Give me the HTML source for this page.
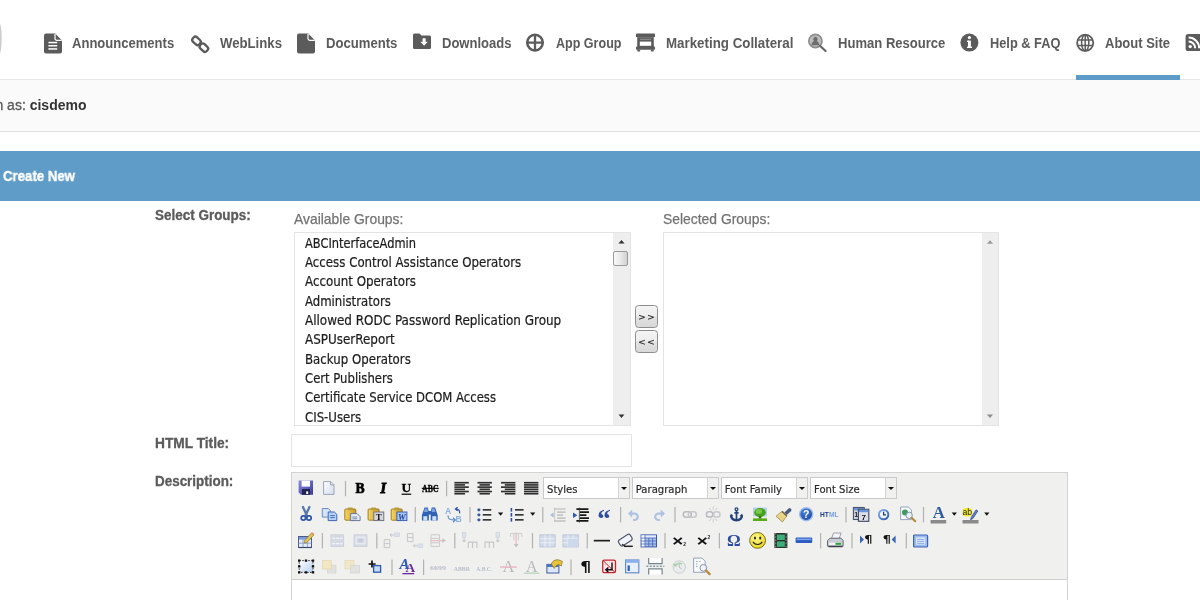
<!DOCTYPE html>
<html><head><meta charset="utf-8"><title>Create New</title>
<style>
*{box-sizing:border-box;margin:0;padding:0}
html,body{width:1200px;height:600px;overflow:hidden;background:#fff}
body{position:relative;font-family:"Liberation Sans",sans-serif;color:#555}
.abs{position:absolute}
#nav{position:absolute;left:0;top:0;width:1200px;height:80px;background:#fff;border-bottom:1px solid #e6e6e6}
.ni{position:absolute;top:34.5px;height:16px;font-weight:bold;font-size:14px;line-height:16px;color:#5b5b5b;white-space:nowrap;transform-origin:0 0}
#active{position:absolute;left:1076px;top:74.5px;width:104px;height:5px;background:#5c9bc8}
#logbar{position:absolute;left:0;top:80px;width:1200px;height:52px;background:#fafafa;border-bottom:1px solid #e3e3e3}
#logbar div{position:absolute;left:-58.3px;top:17px;font-size:14px;line-height:16px;color:#5a5a5a;white-space:nowrap;-webkit-text-stroke:.3px #5a5a5a}
#logbar b{color:#333;-webkit-text-stroke:0}
#bar{position:absolute;left:0;top:151px;width:1200px;height:50px;background:#5f9dc8}
#bar div{position:absolute;left:2.6px;top:17px;font-size:14px;line-height:16px;font-weight:bold;color:#fff;-webkit-text-stroke:.35px #fff;white-space:nowrap;transform-origin:0 0;transform:scaleX(.944)}
.lbl{position:absolute;left:154.700px;font-weight:bold;font-size:14px;line-height:16px;color:#5b5b5b;-webkit-text-stroke:.3px #5b5b5b;white-space:nowrap;transform-origin:0 0;transform:scaleX(.954)}
.sub{position:absolute;font-size:15px;line-height:16px;color:#727272;-webkit-text-stroke:.25px #727272;white-space:nowrap;transform-origin:0 0}
.box{position:absolute;background:#fff;border:1px solid #e4e4e4}
.list{position:absolute;left:305px;top:233.9px;font-family:"DejaVu Sans Condensed","DejaVu Sans",sans-serif;font-size:13.7px;line-height:19.3px;color:#1c1c1c;white-space:nowrap;-webkit-text-stroke:.2px #1c1c1c}
.list span{display:block;width:max-content;transform-origin:0 0}
.track{position:absolute;background:#eee}
.btn{position:absolute;left:635px;width:23px;height:23px;border:1.3px solid #8e8e8e;border-radius:3.5px;background:linear-gradient(#f4f4f4,#eee 45%,#e2e2e2 55%,#d8d8d8);font-family:"DejaVu Sans",sans-serif;font-weight:bold;font-size:9.4px;line-height:22.4px;text-align:center;color:#333;letter-spacing:1.2px;padding-left:1px;white-space:nowrap}
.sel{position:absolute;top:477px;width:87px;height:22px;border:1px solid #cacaca;background:#fff}
.sel span{position:absolute;left:3px;top:4.6px;font-family:"DejaVu Sans Condensed","DejaVu Sans",sans-serif;font-size:11.2px;line-height:14px;color:#2c2c2c;white-space:nowrap;-webkit-text-stroke:.2px #2c2c2c}
.sel i{position:absolute;right:0;top:0;width:11px;height:20px;background:#f0f0ee;border-left:1px solid #d4d4d4}
.sel i:after{content:"";position:absolute;left:2.4px;top:8.8px;border:3.1px solid transparent;border-top:3.3px solid #111;border-bottom:0}
#tbsvg text{font-family:"Liberation Serif",serif}
#w{position:absolute;left:0;top:0;width:1200px;height:600px;will-change:transform}
</style></head><body><div id="w">
<div id="nav">
<span class="ni" style="left:72.4px;transform:scaleX(0.9317)">Announcements</span>
<span class="ni" style="left:219.6px;transform:scaleX(0.9412)">WebLinks</span>
<span class="ni" style="left:325.6px;transform:scaleX(0.9366)">Documents</span>
<span class="ni" style="left:441.6px;transform:scaleX(0.9307)">Downloads</span>
<span class="ni" style="left:555.6px;transform:scaleX(0.8959)">App Group</span>
<span class="ni" style="left:665.6px;transform:scaleX(0.9520)">Marketing Collateral</span>
<span class="ni" style="left:837.6px;transform:scaleX(0.9326)">Human Resource</span>
<span class="ni" style="left:989.6px;transform:scaleX(0.9141)">Help &amp; FAQ</span>
<span class="ni" style="left:1105.0px;transform:scaleX(0.9286)">About Site</span>
<svg class="abs" style="left:0;top:0" width="1200" height="80" viewBox="0 0 1200 80">
<defs><linearGradient id="lg" x1="0" x2="1"><stop offset="0" stop-color="#c4c4c4"/><stop offset="1" stop-color="#eee"/></linearGradient></defs><path d="M0 23 Q4.5 38 0 54 Z" fill="url(#lg)"/><g transform="translate(44,33.6)" fill="#5b5b5b"><path d="M2 0h9.2l6.8 6.8V18a2 2 0 0 1-2 2H2a2 2 0 0 1-2-2V2a2 2 0 0 1 2-2z"/><path d="M11 .3v4.5a2 2 0 0 0 2 2h4.7" fill="none" stroke="#fff" stroke-width="1.2"/><rect x="4.4" y="8.2" width="8.8" height="1.5" fill="#fff"/><rect x="4.4" y="11.4" width="8.8" height="1.5" fill="#fff"/><rect x="4.4" y="14.6" width="8.8" height="1.5" fill="#fff"/></g>
<g fill="none" stroke="#5b5b5b" stroke-width="2.3"><rect x="-4.4" y="-3" width="8.8" height="6" rx="2.5" transform="translate(196.5,40.9) rotate(43)"/><rect x="-4.4" y="-3" width="8.800" height="6" rx="2.5" transform="translate(203.900,47.700) rotate(43)"/></g>
<g transform="translate(297,33.6)" fill="#5b5b5b"><path d="M2 0h9.2l6.8 6.8V18a2 2 0 0 1-2 2H2a2 2 0 0 1-2-2V2a2 2 0 0 1 2-2z"/><path d="M11 .3v4.5a2 2 0 0 0 2 2h4.7" fill="none" stroke="#fff" stroke-width="1.2"/></g>
<g transform="translate(413,33.6)"><path d="M1.5 0h5l2 2h8a1.5 1.5 0 0 1 1.5 1.5v10.5a1.5 1.5 0 0 1-1.5 1.5h-15A1.5 1.5 0 0 1 0 14V1.5A1.5 1.5 0 0 1 1.5 0z" fill="#5b5b5b"/><path d="M9.6 4.6h3v3.6h2.2l-3.7 3.9-3.7-3.9h2.2z" fill="#fff"/></g>
<g fill="none" stroke="#5b5b5b" stroke-width="2.3"><circle cx="535" cy="42.6" r="7.8" stroke-width="2.5"/><path d="M535 35v15.4M527.2 42.6h15.6"/></g>
<g transform="translate(636,33.6)" fill="#5b5b5b"><rect x="0" y="0" width="19" height="3.6" rx=".8"/><path d="M1.2 3.6h16.6v9.8H1.2z"/><rect x="3.8" y="8" width="11.4" height="4.2" fill="#fff"/><rect x="0" y="13" width="19" height="3.2" rx=".8"/><rect x="1.2" y="16" width="3" height="2" rx=".8"/><rect x="14.8" y="16" width="3" height="2" rx=".8"/><rect x="3.8" y="5.2" width="11.4" height="1" fill="#fff" opacity=".35"/></g>
<g><circle cx="815.4" cy="41" r="6.6" fill="#bdbdbd" stroke="#8c8c8c" stroke-width="1.6"/><path d="M811.6 45.2c0-3 1.6-3.6 2.3-4.2a2.2 2.4 0 1 1 3 0c.7.6 2.3 1.2 2.3 4.2z" fill="#6e6e6e"/><path d="M820.2 46l5.4 5" stroke="#666" stroke-width="2.2" stroke-linecap="round"/></g>
<g><circle cx="969.4" cy="42.6" r="9" fill="#5b5b5b"/><rect x="968" y="40.6" width="2.9" height="7.2" fill="#fff"/><circle cx="969.4" cy="37.6" r="1.6" fill="#fff"/><rect x="967" y="40.6" width="2" height="1.4" fill="#fff"/><rect x="967" y="46.6" width="5" height="1.4" fill="#fff"/></g>
<g fill="none" stroke="#5b5b5b" stroke-width="1.5"><circle cx="1085.2" cy="42.8" r="8.1" stroke-width="1.8"/><ellipse cx="1085.2" cy="42.8" rx="3.6" ry="8.1"/><path d="M1085.2 34.7v16.2M1077.4 40h15.6M1077.4 45.6h15.6"/></g>
<g transform="translate(1185.6,34)"><rect width="17" height="17" rx="2.6" fill="#5b5b5b"/><circle cx="4.6" cy="12.6" r="1.7" fill="#fff"/><path d="M3 7.6a6.6 6.6 0 0 1 6.6 6.6M3 3.6a10.6 10.6 0 0 1 10.6 10.6" fill="none" stroke="#fff" stroke-width="2"/></g>
</svg>
<div id="active"></div>
</div>
<div id="logbar"><div>Logged in as: <b>cisdemo</b></div></div>
<div id="bar"><div>Create New</div></div>
<div class="lbl" style="top:206.900px;transform:scaleX(.962)">Select Groups:</div>
<div class="sub" style="left:293.8px;top:210.5px;transform:scaleX(.926)">Available Groups:</div>
<div class="sub" style="left:662.8px;top:210.5px;transform:scaleX(.926)">Selected Groups:</div>
<div class="box" style="left:294px;top:232px;width:337px;height:193.5px"></div>
<div class="track" style="left:613px;top:233px;width:17px;height:192px"></div>
<svg class="abs" style="left:613px;top:233px" width="17" height="191" viewBox="0 0 17 191">
<path d="M5.4 10.6L8.5 7l3.1 3.6z" fill="#333"/><path d="M5.6 181.5L8.5 184.9 11.4 181.5z" fill="#333"/>
<defs><linearGradient id="th" x1="0" x2="1"><stop offset="0" stop-color="#f8f8f8"/><stop offset=".5" stop-color="#e9e9e9"/><stop offset="1" stop-color="#cfcfcf"/></linearGradient></defs>
<rect x=".5" y="18.5" width="14" height="14" rx="1.5" fill="url(#th)" stroke="#9a9a9a"/></svg>
<div class="box" style="left:663px;top:232px;width:336px;height:193.5px"></div>
<div class="track" style="left:982px;top:233px;width:16px;height:192px"></div>
<svg class="abs" style="left:982px;top:233px" width="16" height="191" viewBox="0 0 16 191"><path d="M4.900 10.800L8 7.200l3.100 3.600z" fill="#999"/><path d="M4.900 181.400L8 185 11.100 181.400z" fill="#8c8c8c"/></svg>
<div class="list"><span style="transform:scaleX(0.9283)">ABCInterfaceAdmin</span><span style="transform:scaleX(0.9588)">Access Control Assistance Operators</span><span style="transform:scaleX(0.9640)">Account Operators</span><span style="transform:scaleX(0.9499)">Administrators</span><span style="transform:scaleX(0.9733)">Allowed RODC Password Replication Group</span><span style="transform:scaleX(0.9708)">ASPUserReport</span><span style="transform:scaleX(0.9571)">Backup Operators</span><span style="transform:scaleX(0.9450)">Cert Publishers</span><span style="transform:scaleX(0.9467)">Certificate Service DCOM Access</span><span style="transform:scaleX(0.9528)">CIS-Users</span></div>
<div class="btn" style="top:305px">&gt;&gt;</div>
<div class="btn" style="top:330px">&lt;&lt;</div>
<div class="lbl" style="top:435px;transform:scaleX(.98)">HTML Title:</div>
<div class="box" style="left:291px;top:434px;width:341px;height:33px"></div>
<div class="lbl" style="top:473px;transform:scaleX(.959)">Description:</div>
<div id="ed" class="abs" style="left:291px;top:472px;width:777px;height:140px;border:1px solid #d3d3d3;background:#fff">
<div id="tb" class="abs" style="left:0;top:0;width:775px;height:107px;background:#f0f0ee;border-bottom:1px solid #cfcfcf"></div>
</div>
<div class="sel" style="left:543px"><span>Styles</span><i></i></div>
<div class="sel" style="left:631.8px"><span>Paragraph</span><i></i></div>
<div class="sel" style="left:720.7px"><span>Font Family</span><i></i></div>
<div class="sel" style="left:810px"><span>Font Size</span><i></i></div>
<svg id="tbsvg" class="abs" style="left:0;top:0" width="1200" height="600" viewBox="0 0 1200 600">
<g transform="translate(298.6,480.6)" ><defs><linearGradient id="sv" x1="0" y1="0" x2="1" y2="1"><stop offset="0" stop-color="#8a8ae0"/><stop offset="1" stop-color="#3a3a9c"/></linearGradient></defs><path d="M0 0h14.4v14.2h-12L0 12z" fill="url(#sv)"/><rect x="3" y="0" width="8.4" height="6" fill="#fff"/><rect x="3.4" y="8.4" width="8" height="5.800" fill="#22224e"/><rect x="7.600" y="10.800" width="2" height="2.600" fill="#fff"/></g>
<g transform="translate(323,481)" ><defs><linearGradient id="nd" x1="0" y1="0" x2="1" y2="1"><stop offset="0" stop-color="#fff"/><stop offset="1" stop-color="#d4dcee"/></linearGradient></defs><path d="M.6.6h7.2l3.2 3.2v9.6H.6z" fill="url(#nd)" stroke="#9ca4b8" stroke-width="1"/><path d="M7.6.8v3.2h3.2" fill="#e8ecf6" stroke="#8c96ac" stroke-width=".9"/></g>
<rect x="344.9" y="480.8" width="1.2" height="15.4" fill="#b2b2b2"/>
<text x="360" y="492.8" font-size="13.6" font-weight="bold" text-anchor="middle" fill="#000" stroke="#000" stroke-width=".7">B</text>
<text x="383.3" y="492.8" font-size="14.2" font-weight="bold" font-style="italic" text-anchor="middle" fill="#000" stroke="#000" stroke-width=".9">I</text>
<text x="406.4" y="492.4" font-size="13.4" font-weight="bold" text-anchor="middle" fill="#000" stroke="#000" stroke-width=".3">U</text><rect x="401.6" y="493.6" width="9.6" height="1.2" fill="#000"/>
<text x="430.3" y="491.6" font-size="9.4" font-weight="bold" text-anchor="middle" fill="#000" stroke="#000" stroke-width=".3" textLength="16.4" lengthAdjust="spacingAndGlyphs">ABC</text><rect x="421.8" y="487.8" width="17" height="1.1" fill="#000"/>
<rect x="446.0" y="480.8" width="1.2" height="15.4" fill="#b2b2b2"/>
<rect x="454.4" y="481.90" width="14.4" height="1.65" fill="#2e2e2e"/><rect x="454.4" y="484.10" width="10.6" height="1.65" fill="#2e2e2e"/><rect x="454.4" y="486.30" width="14.4" height="1.65" fill="#2e2e2e"/><rect x="454.4" y="488.50" width="10.6" height="1.65" fill="#2e2e2e"/><rect x="454.4" y="490.70" width="14.4" height="1.65" fill="#2e2e2e"/><rect x="454.4" y="492.90" width="10.6" height="1.65" fill="#2e2e2e"/>
<rect x="477.5" y="481.90" width="14.4" height="1.65" fill="#2e2e2e"/><rect x="479.5" y="484.10" width="10.4" height="1.65" fill="#2e2e2e"/><rect x="477.5" y="486.30" width="14.4" height="1.65" fill="#2e2e2e"/><rect x="479.5" y="488.50" width="10.4" height="1.65" fill="#2e2e2e"/><rect x="477.5" y="490.70" width="14.4" height="1.65" fill="#2e2e2e"/><rect x="479.5" y="492.90" width="10.4" height="1.65" fill="#2e2e2e"/>
<rect x="501.0" y="481.90" width="14.4" height="1.65" fill="#2e2e2e"/><rect x="504.8" y="484.10" width="10.6" height="1.65" fill="#2e2e2e"/><rect x="501.0" y="486.30" width="14.4" height="1.65" fill="#2e2e2e"/><rect x="504.8" y="488.50" width="10.6" height="1.65" fill="#2e2e2e"/><rect x="501.0" y="490.70" width="14.4" height="1.65" fill="#2e2e2e"/><rect x="504.8" y="492.90" width="10.6" height="1.65" fill="#2e2e2e"/>
<rect x="524.0" y="481.90" width="14.4" height="1.65" fill="#2e2e2e"/><rect x="524.0" y="484.10" width="14.4" height="1.65" fill="#2e2e2e"/><rect x="524.0" y="486.30" width="14.4" height="1.65" fill="#2e2e2e"/><rect x="524.0" y="488.50" width="14.4" height="1.65" fill="#2e2e2e"/><rect x="524.0" y="490.70" width="14.4" height="1.65" fill="#2e2e2e"/><rect x="524.0" y="492.90" width="14.4" height="1.65" fill="#2e2e2e"/>
<g transform="translate(300.5,507)" ><path d="M2.400 0l4 8.400M9 0L5 8.400" stroke="#5878a8" stroke-width="2.300" fill="none" stroke-linecap="round"/><circle cx="2.9" cy="11" r="2.2" fill="none" stroke="#2a56a4" stroke-width="1.7"/><circle cx="8.5" cy="11" r="2.2" fill="none" stroke="#2a56a4" stroke-width="1.7"/></g>
<g transform="translate(321.8,508)" ><path d="M.5.500h6l2 2v6.600h-8z" fill="#d4e4f8" stroke="#6a8cc4"/><path d="M6.400 4h6.200l2.400 2.400v6.200H6.400z" fill="#b4d0f4" stroke="#3e68b0"/><path d="M8.4 7.6h4.6M8.4 9.6h4.6" stroke="#3e68b0" stroke-width=".9"/></g>
<g transform="translate(344.3,507.4)" ><defs><linearGradient id="cb344" x1="0" x2="1"><stop offset="0" stop-color="#f6d860"/><stop offset="1" stop-color="#c89a28"/></linearGradient></defs><rect x=".5" y="1.6" width="11" height="11.2" rx="1" fill="url(#cb344)" stroke="#9a7420" stroke-width=".9"/><rect x="3.400" y="0" width="5.200" height="2.800" rx=".8" fill="#b89c3c"/><path d="M6.4 6.2h6.4l3 3v4H6.4z" fill="#e8eef8" stroke="#5a6e94" stroke-width=".9"/><path d="M8 9.6h5M8 11.4h5" stroke="#5a6e94" stroke-width=".8"/></g>
<g transform="translate(367.6,507.4)" ><defs><linearGradient id="cb367" x1="0" x2="1"><stop offset="0" stop-color="#f6d860"/><stop offset="1" stop-color="#c89a28"/></linearGradient></defs><rect x=".5" y="1.6" width="11" height="11.2" rx="1" fill="url(#cb367)" stroke="#9a7420" stroke-width=".9"/><rect x="3.400" y="0" width="5.200" height="2.800" rx=".8" fill="#b89c3c"/><rect x="6.2" y="4.6" width="10" height="8.6" fill="#d6d6de" stroke="#6a6a7a" stroke-width=".9"/><text x="11.2" y="12.2" font-size="9" font-weight="bold" text-anchor="middle" fill="#111">T</text></g>
<g transform="translate(390.7,507.4)" ><defs><linearGradient id="cb390" x1="0" x2="1"><stop offset="0" stop-color="#f6d860"/><stop offset="1" stop-color="#c89a28"/></linearGradient></defs><rect x=".5" y="1.6" width="11" height="11.2" rx="1" fill="url(#cb390)" stroke="#9a7420" stroke-width=".9"/><rect x="3.400" y="0" width="5.200" height="2.800" rx=".8" fill="#b89c3c"/><rect x="6.2" y="4.6" width="10" height="8.6" fill="#a8c8f4" stroke="#2c58b0" stroke-width=".9"/><text x="11.2" y="12.2" font-size="8.6" font-weight="bold" font-style="italic" text-anchor="middle" fill="#1c3c9c">W</text></g>
<rect x="414.7" y="507" width="1.2" height="15.4" fill="#b2b2b2"/>
<g transform="translate(421.9,507.6)" ><path d="M2.6 0h3.4l1 5v8H0V7.6zM9.8 0h3.4l2.6 7.6V13H8.8V5z" fill="#2f62b4"/><rect x="6" y="3.4" width="3.8" height="3.6" fill="#2f62b4"/><rect x="1.4" y="8.6" width="4" height="4.4" fill="#cfe0f6"/><rect x="10.4" y="8.6" width="4" height="4.4" fill="#cfe0f6"/><path d="M3 .8h2.4l.6 3.6H2z M10.2.8h2.4l1 3.6h-3.8z" fill="#7aa4e0"/></g>
<g transform="translate(445,507)" ><text x="0" y="7.2" font-size="8.6" font-weight="bold" fill="#8cb0e4" style="font-family:'Liberation Sans',sans-serif">A</text><text x="10.6" y="14.6" font-size="8.6" font-weight="bold" fill="#8cb0e4" style="font-family:'Liberation Sans',sans-serif">B</text><path d="M3 8.4c0 4 2.4 4.6 6.4 4.6M8 10.8l2.4 2.2-2.4 2.2" fill="none" stroke="#5c8cd4" stroke-width="1.2"/><path d="M14.6 6.4c.4-3-1-4.4-3.6-4.4M12.6.2l-2.2 1.8 2.2 1.8" fill="none" stroke="#2a4ea6" stroke-width="1.2"/></g>
<rect x="469.4" y="507" width="1.2" height="15.4" fill="#b2b2b2"/>
<rect x="482.7" y="509.1" width="8.6" height="1.5" fill="#222"/><rect x="477.5" y="508.4" width="2.800" height="2.800" rx=".8" fill="#3a5a9c"/><rect x="482.7" y="514.1" width="8.6" height="1.5" fill="#222"/><rect x="477.5" y="513.4" width="2.800" height="2.800" rx=".8" fill="#3a5a9c"/><rect x="482.7" y="519.1" width="8.6" height="1.5" fill="#222"/><rect x="477.5" y="518.4" width="2.800" height="2.800" rx=".8" fill="#3a5a9c"/>
<path d="M498.0 512.6h5.2l-2.6 3.2z" fill="#111"/>
<rect x="515.0" y="509.1" width="8.6" height="1.5" fill="#222"/><rect x="510.6" y="508.0" width="1.6" height="3.6" fill="#2c4e9c"/><rect x="515.0" y="514.1" width="8.6" height="1.5" fill="#222"/><rect x="510.6" y="513.0" width="1.6" height="3.6" fill="#2c4e9c"/><rect x="515.0" y="519.1" width="8.6" height="1.5" fill="#222"/><rect x="510.6" y="518.0" width="1.6" height="3.6" fill="#2c4e9c"/>
<path d="M530.1 512.6h5.2l-2.6 3.2z" fill="#111"/>
<rect x="542.1999999999999" y="507" width="1.2" height="15.4" fill="#b2b2b2"/>
<g transform="translate(550,507.6)" opacity=".38"><path d="M4 1.4h11.6M7 4.6h8.6M7 7.6h6M7 10.6h8.6" stroke="#555" stroke-width="1.2"/><path d="M4 13.4h11.6" stroke="#555" stroke-width="1.2"/><path d="M4.6 0v14" stroke="#777" stroke-width=".8"/><path d="M0 7.4l3.6-2.4v4.8z" fill="#3a64b8"/></g>
<g transform="translate(573,507.6)" ><path d="M3.4 1.6h12M7 4.6h9M7 7.6h6.4M7 10.6h9M3.4 13.2h12" stroke="#161616" stroke-width="1.7"/><path d="M6.4 0v15" stroke="#333" stroke-width=".8"/><path d="M0 5l4.4 2.7L0 10.4z" fill="#2c58b6"/></g>
<text x="604" y="527.6" font-size="27" font-weight="bold" text-anchor="middle" fill="#2c4e9c">“</text>
<rect x="620.0" y="507" width="1.2" height="15.4" fill="#b2b2b2"/>
<g transform="translate(628,509.4)" opacity=".38"><path d="M1 4.2h5.6a3.2 3.2 0 0 1 0 6.4H5" fill="none" stroke="#4a7ad0" stroke-width="2.2"/><path d="M0 4.2L4.2 0v8.4z" fill="#4a7ad0"/></g>
<g transform="translate(653,509.4)" opacity=".38"><path d="M11 4.2H5.4a3.2 3.2 0 0 0 0 6.4H7" fill="none" stroke="#4a7ad0" stroke-width="2.2"/><path d="M12 4.2L7.8 0v8.4z" fill="#4a7ad0"/></g>
<rect x="674.4" y="507" width="1.2" height="15.4" fill="#b2b2b2"/>
<g transform="translate(682.5,511)" opacity=".38"><rect x=".8" y=".8" width="8" height="5.4" rx="2.7" fill="none" stroke="#667" stroke-width="1.6"/><rect x="5.8" y=".8" width="8" height="5.4" rx="2.7" fill="none" stroke="#889" stroke-width="1.6"/></g>
<g transform="translate(705.6,506.4)" opacity=".38"><rect x=".8" y="5.4" width="6.4" height="5.2" rx="2.6" fill="none" stroke="#667" stroke-width="1.6"/><rect x="8" y="5.4" width="6.4" height="5.2" rx="2.6" fill="none" stroke="#889" stroke-width="1.6"/><path d="M7.6 0v3.6M7.6 12.4V16M3.6 1.4l2 2.6M11.6 1.4l-2 2.6M3.6 14.6l2-2.6M11.6 14.6l-2-2.6" stroke="#99a" stroke-width="1"/></g>
<g transform="translate(730,507.4)" ><circle cx="6.500" cy="1.900" r="1.400" fill="none" stroke="#24447c" stroke-width="1.300"/><path d="M6.500 3.400v9.200M4.400 5.400h4.200" stroke="#24447c" stroke-width="1.700" fill="none"/><path d="M1 7.800c.2 3.400 2.400 4.900 5.500 5.100 3.100-.2 5.300-1.700 5.500-5.100" fill="none" stroke="#24447c" stroke-width="2.400"/><path d="M0 9.600l.9-3.400 2.500 2.400zM13 9.600l-.9-3.400-2.500 2.400z" fill="#24447c"/></g>
<g transform="translate(753,507.6)" ><rect x="0" y="0" width="14" height="9" fill="#b4d0f0"/><rect x="0" y="8.600" width="14" height="2.400" fill="#e4f0dc"/><rect x="0" y="10.800" width="14" height="2.600" fill="#58ac14"/><ellipse cx="7" cy="5" rx="5.800" ry="4.600" fill="#48a020"/><ellipse cx="5.800" cy="3.800" rx="3.200" ry="2.300" fill="#78cc44"/><path d="M6.400 8.400h1.600l.4 2.600H5.600z" fill="#2c6c14"/></g>
<g transform="translate(775,507.6)" ><path d="M9.400 5L13.600 .8a1.900 1.900 0 0 1 2.600 2.600L11.800 7.400z" fill="#4a5a80"/><path d="M1 8.600l6-4.800 4.800 4.600-4.400 6z" fill="#ecd88c" stroke="#a08c4c" stroke-width=".8"/><path d="M7 3.800l4.800 4.600" stroke="#7a6a44" stroke-width="1.600"/><path d="M3 9.600l4 4M5 8l4 4" stroke="#ccb464" stroke-width=".7"/></g>
<g transform="translate(799,507)" ><defs><radialGradient id="hp" cx=".42" cy=".32" r=".8"><stop offset="0" stop-color="#4a84e0"/><stop offset="1" stop-color="#163c9c"/></radialGradient></defs><circle cx="7.200" cy="7.200" r="6.500" fill="url(#hp)" stroke="#9cbcec" stroke-width="1.400"/><text x="7.200" y="10.900" font-size="10.500" font-weight="bold" text-anchor="middle" fill="#fff" style="font-family:'Liberation Sans',sans-serif">?</text></g>
<text x="820" y="517.2" font-size="6.400" font-weight="bold" style="font-family:'Liberation Sans',sans-serif" textLength="18.600" lengthAdjust="spacingAndGlyphs"><tspan fill="#1c3c8c">HT</tspan><tspan fill="#7aa0dc">ML</tspan></text>
<rect x="845.4" y="507" width="1.2" height="15.4" fill="#b2b2b2"/>
<g transform="translate(852.9,507)" ><rect x=".5" y=".5" width="10.800" height="12" fill="#d0d5e0" stroke="#4a546c" stroke-width="1.100"/><rect x="1" y="1" width="9.800" height="2.400" fill="#6a94dc"/><rect x="5.500" y="2.300" width="10.400" height="12" fill="#dde0e8" stroke="#3c465c" stroke-width="1.100"/><rect x="6" y="2.800" width="9.400" height="2.400" fill="#6a94dc"/><text x="10.800" y="12.900" font-size="8" font-weight="bold" text-anchor="middle" fill="#111" style="font-family:'Liberation Sans',sans-serif">7</text><text x="3.200" y="10.400" font-size="7" font-weight="bold" text-anchor="middle" fill="#223" style="font-family:'Liberation Sans',sans-serif">1</text></g>
<g transform="translate(878,509)" ><defs><linearGradient id="ck" x1="0" y1="0" x2="1" y2="1"><stop offset="0" stop-color="#8ab4ec"/><stop offset="1" stop-color="#2c58b0"/></linearGradient></defs><circle cx="5.600" cy="5.600" r="4.700" fill="#f0f5fd" stroke="url(#ck)" stroke-width="2"/><path d="M5.600 2.800v3.100h2.400" fill="none" stroke="#223a70" stroke-width="1.200"/></g>
<g transform="translate(900,506.4)" ><path d="M.6.600h7.800l3 3v9.600H.6z" fill="#f6f8fc" stroke="#8c9cb8" stroke-width=".9"/><circle cx="5" cy="6" r="3" fill="#3c9a5c"/><circle cx="9.200" cy="9" r="3.200" fill="#e8f0fa" fill-opacity=".85" stroke="#8a94a8" stroke-width="1"/><path d="M11.600 11.400l3.600 3.400" stroke="#b88a3c" stroke-width="2.200" stroke-linecap="round"/></g>
<rect x="922.9" y="507" width="1.2" height="15.4" fill="#b2b2b2"/>
<text x="938.700" y="518" font-size="16.800" font-weight="bold" text-anchor="middle" fill="#2c5a9c">A</text><rect x="930.600" y="520" width="15.600" height="3.500" fill="#8a8a8a"/>
<path d="M951.7 512.6h5.2l-2.6 3.2z" fill="#111"/>
<g transform="translate(962.5,507)" ><rect x="0" y="1" width="9.600" height="8.600" rx="3" fill="#f4ec3c"/><text x="0" y="8.400" font-size="8.600" fill="#222" style="font-family:'Liberation Sans',sans-serif">ab</text><path d="M8.600 10.400l5-7.600 1.800 1.200-5 7.600-2.400 1.200z" fill="#5a7ac4" stroke="#2c3c7c" stroke-width=".6"/><rect x="0" y="13" width="16" height="3.500" fill="#8a8a8a"/></g>
<path d="M984.2 512.6h5.2l-2.6 3.2z" fill="#111"/>
<g transform="translate(298,532)" ><rect x=".5" y="4.500" width="13" height="11" fill="#e6ecf7" stroke="#4a5c8c" stroke-width="1"/><rect x="1" y="5" width="12" height="2.600" fill="#7a9ad8"/><path d="M.5 11.200h13M5 7.500v8M9.400 7.500v8" stroke="#8a9cc4" stroke-width=".9"/><path d="M.5 15.500h13" stroke="#3a4a74" stroke-width="1.200"/><path d="M6.600 8.400L13.400 1l2.400 2-6.800 7.400-2.800.8z" fill="#dcc458" stroke="#94782c" stroke-width=".7"/><path d="M13.400 1l1-.8 2 1.800-.6 1z" fill="#e88a6a"/></g>
<rect x="321.79999999999995" y="533" width="1.2" height="15.4" fill="#b2b2b2"/>
<g transform="translate(330.5,534.4)" opacity=".85"><rect x=".4" y=".4" width="12.800" height="11.800" fill="#d2d7e2" stroke="#c2c8d6" stroke-width=".8"/><path d="M1.600 4h10.400M1.600 9.200h10.400" stroke="#f4f6fa" stroke-width="1.300" stroke-dasharray="3 1"/></g>
<g transform="translate(353.6,534.4)" opacity=".85"><rect x=".4" y=".4" width="13" height="11.800" fill="#d2d7e2" stroke="#c2c8d6" stroke-width=".8"/><rect x="2.400" y="2.800" width="9" height="6.600" fill="none" stroke="#eef1f7" stroke-width="1"/><rect x="4.800" y="4.800" width="4.200" height="2.600" fill="#bcc4d6"/></g>
<rect x="376.2" y="533" width="1.2" height="15.4" fill="#b2b2b2"/>
<g transform="translate(383.6,533)" opacity=".24"><path d="M.6 6.600h5.600v8H.6zM.6 10.600h5.600" fill="none" stroke="#445" stroke-width="1"/><rect x="11" y="0" width="5" height="3.600" fill="#9ab8e8" stroke="#5a78b0" stroke-width=".7"/><path d="M10.400 2H6.600M8.400 .4L6.400 2l2 1.600" fill="none" stroke="#445" stroke-width="1"/></g>
<g transform="translate(406.8,533)" opacity=".24"><path d="M.6 .600h5.600v8H.6zM.6 4.600h5.600" fill="none" stroke="#445" stroke-width="1"/><rect x="11" y="11" width="5" height="3.600" fill="#9ab8e8" stroke="#5a78b0" stroke-width=".7"/><path d="M10.400 12.800H6.600M8.400 11.200l-2 1.600 2 1.600" fill="none" stroke="#445" stroke-width="1"/></g>
<g transform="translate(430,533.8)" opacity=".24"><path d="M1 1h8.600v11.600H1zM1 4.600h8.600M1 9h8.600" fill="none" stroke="#556" stroke-width="1"/><path d="M0 6.800h14" stroke="#d02c4c" stroke-width="1.300"/><path d="M12.400 4.400l3.600 2.400-3.600 2.400z" fill="#333"/></g>
<rect x="454.2" y="533" width="1.2" height="15.4" fill="#b2b2b2"/>
<g transform="translate(461.3,532.5)" opacity=".24"><rect x="1" y="0" width="3.600" height="5" fill="#9ab8e8" stroke="#5a78b0" stroke-width=".7"/><path d="M2.800 5.600v3.600M1.200 7.600l1.600 2 1.600-2" fill="none" stroke="#334" stroke-width="1"/><path d="M7 15.400V9.600h8.600v5.800M11.300 9.600v5.800" fill="none" stroke="#445" stroke-width="1.100"/></g>
<g transform="translate(485,532.5)" opacity=".24"><rect x="11" y="0" width="3.600" height="5" fill="#9ab8e8" stroke="#5a78b0" stroke-width=".7"/><path d="M12.800 5.600v3.600M11.200 7.600l1.600 2 1.600-2" fill="none" stroke="#334" stroke-width="1"/><path d="M0 15.400V9.600h8.600v5.800M4.300 9.600v5.800" fill="none" stroke="#445" stroke-width="1.100"/></g>
<g transform="translate(509.4,532.5)" opacity=".24"><path d="M1 4.400V1h11.400v3.400M4.400 1v7M9 1v7" fill="none" stroke="#667" stroke-width="1"/><path d="M6.700 0v13" stroke="#d02c4c" stroke-width="1.400"/><path d="M4.400 11.600l2.300 3.600 2.300-3.600z" fill="#333"/></g>
<rect x="531.9" y="533" width="1.2" height="15.4" fill="#b2b2b2"/>
<g transform="translate(539.4,534.4)" opacity=".75"><rect x=".5" y=".5" width="15.200" height="12" fill="#c6d3e8" stroke="#aab8d0"/><path d="M.5 4.400h15.200M.5 8.400h15.200M5.600 .5v12M10.600 .5v12" stroke="#eef2f8" stroke-width=".9"/></g>
<g transform="translate(562.5,534.4)" opacity=".75"><rect x=".5" y=".5" width="15.200" height="12" fill="#c6d3e8" stroke="#aab8d0"/><path d="M.5 4.400h15.200M.5 8.400h15.200M5.600 .5v12M10.600 .5v12" stroke="#eef2f8" stroke-width=".9"/><rect x="5.600" y="4.400" width="10" height="8" fill="#c0d0ea"/></g>
<rect x="586.6999999999999" y="533" width="1.2" height="15.4" fill="#b2b2b2"/>
<rect x="593.800" y="539.800" width="16.200" height="1.700" fill="#222"/>
<g transform="translate(618,534.4)" ><rect x="-6.900" y="-3.500" width="13.800" height="7" rx="2.300" fill="#f2f5fb" stroke="#4e586e" stroke-width="1.150" transform="translate(7.300,5.700) rotate(-33)"/><path d="M4 9.800l3 1.900" stroke="#333" stroke-width="1.300"/><path d="M6 11.900h8.800" stroke="#222" stroke-width="1.500"/></g>
<g transform="translate(640.6,534.4)" ><rect x=".5" y=".5" width="15.400" height="12" fill="#a8c0ee" stroke="#3858a8"/><rect x="1" y="1" width="14.400" height="2.500" fill="#e4ecfa"/><rect x="1" y="1" width="3.400" height="11" fill="#f4f8fe"/><path d="M.5 3.600h15.400M.5 6.600h15.400M.5 9.600h15.400M4.400 .5v12M8.200 3.500v9M12 3.500v9" stroke="#4464b4" stroke-width=".75"/></g>
<rect x="664.4" y="533" width="1.2" height="15.4" fill="#b2b2b2"/>
<text transform="translate(672.300,545.600) scale(1.3,1)" font-size="14.500" font-weight="bold" fill="#111" style="font-family:'Liberation Sans',sans-serif">×</text><text x="683.200" y="546.400" font-size="5" font-weight="bold" fill="#223" style="font-family:'Liberation Sans',sans-serif">2</text>
<text transform="translate(696.800,546.400) scale(1.3,1)" font-size="14.500" font-weight="bold" fill="#111" style="font-family:'Liberation Sans',sans-serif">×</text><text x="707.400" y="539" font-size="5" font-weight="bold" fill="#223" style="font-family:'Liberation Sans',sans-serif">2</text>
<rect x="718.8" y="533" width="1.2" height="15.4" fill="#b2b2b2"/>
<text x="727" y="545.600" font-size="16.500" font-weight="bold" fill="#2c4e9c" textLength="13.700" lengthAdjust="spacingAndGlyphs">Ω</text>
<g transform="translate(749,532)" ><defs><radialGradient id="sm" cx=".4" cy=".35" r=".7"><stop offset="0" stop-color="#fdf88c"/><stop offset="1" stop-color="#ecd81c"/></radialGradient></defs><circle cx="8.600" cy="8.400" r="7.900" fill="url(#sm)" stroke="#6a5c14" stroke-width=".9"/><ellipse cx="6" cy="6" rx="1" ry="1.600" fill="#222"/><ellipse cx="11.200" cy="6" rx="1" ry="1.600" fill="#222"/><path d="M4 9.800c1.600 3.600 7.600 3.600 9.200 0" fill="none" stroke="#222" stroke-width="1.200"/></g>
<g transform="translate(774.4,533)" ><rect x="0" y="0" width="13" height="15" fill="#2c342c"/><rect x="2.600" y="1.600" width="7.800" height="5.400" fill="#3cb07c"/><rect x="2.600" y="8.400" width="7.800" height="5.400" fill="#3cb07c"/><path d="M1.300 0v15M11.700 0v15" stroke="#7c847c" stroke-width="1.200" stroke-dasharray="1.600 1.600"/></g>
<g transform="translate(795.6,537.5)" ><rect x="0" y="0" width="16.600" height="5.500" rx="1" fill="#2c5cc0"/><rect x="1" y="1" width="14.600" height="1.600" fill="#7aa4ec"/></g>
<rect x="820.0" y="533" width="1.2" height="15.4" fill="#b2b2b2"/>
<g transform="translate(827.5,533)" ><path d="M4 5.600L6 0h7.600l-2 5.600z" fill="#f4f4fa" stroke="#8a8a9c" stroke-width=".8"/><path d="M0 7.600l2.600-2.400h11l2 2.400v5.600H0z" fill="#c8ccd4" stroke="#5a5e6a" stroke-width=".9"/><rect x="1.600" y="9.600" width="12.400" height="2.400" fill="#f4f4f4"/><rect x="8" y="9.800" width="5.600" height="2" fill="#2ca03c"/><path d="M1 13.600h14" stroke="#3a3e4a" stroke-width="1.300"/></g>
<rect x="851.4" y="533" width="1.2" height="15.4" fill="#b2b2b2"/>
<path d="M860 535.600l4 4-4 4z" fill="#3c64b4"/><text transform="translate(864.300,542.800) scale(1.32,1)" font-size="9.800" font-weight="bold" fill="#111" style="font-family:'DejaVu Sans',sans-serif">¶</text>
<text transform="translate(882.700,542.800) scale(1.32,1)" font-size="9.800" font-weight="bold" fill="#111" style="font-family:'DejaVu Sans',sans-serif">¶</text><path d="M895.600 535.600l-4 4 4 4z" fill="#3c64b4"/>
<rect x="905.6999999999999" y="533" width="1.2" height="15.4" fill="#b2b2b2"/>
<g transform="translate(913,534.4)" ><rect x=".6" y=".6" width="14" height="12" rx="1" fill="#9cbcf0" stroke="#3c64b8" stroke-width="1.200"/><rect x="3" y="3" width="9.200" height="7.200" fill="#dce8fc"/><path d="M4 5h7.200M4 7h7.200M4 9h7.200" stroke="#7a9cdc" stroke-width=".8"/></g>
<g transform="translate(298,559.4)" ><defs><linearGradient id="il" x1="0" y1="0" x2="1" y2="1"><stop offset="0" stop-color="#fff"/><stop offset="1" stop-color="#b8d0f0"/></linearGradient></defs><rect x="1.200" y="1.200" width="13.800" height="11.800" fill="url(#il)" stroke="#222" stroke-width=".9" stroke-dasharray="1.600 1.400"/><path d="M0 0h2.400v2.400H0zM6.800 0h2.400v2.400H6.800zM13.800 0h2.400v2.400h-2.400zM0 11.800h2.400v2.400H0zM6.800 11.800h2.400v2.400H6.800zM13.800 11.800h2.400v2.400h-2.400zM0 5.800h2.400v2.400H0zM13.800 5.800h2.400v2.400h-2.400z" fill="#111"/></g>
<g transform="translate(322.4,560.6)" opacity=".36"><rect x="5" y="4.600" width="8.600" height="7.800" fill="#c8c8c8" stroke="#999" stroke-width=".6"/><rect x="0" y="0" width="9" height="8.400" fill="#f4d878" stroke="#c8a040" stroke-width=".6"/></g>
<g transform="translate(345,560.6)" opacity=".36"><rect x="0" y="0" width="9" height="8.400" fill="#f0dc80" stroke="#c8a040" stroke-width=".6"/><rect x="5.600" y="4.600" width="9" height="7.800" fill="#c8c8c8" stroke="#999" stroke-width=".6"/></g>
<g transform="translate(368.6,560.6)" ><path d="M3.400 0v7M0 3.400h7" stroke="#111" stroke-width="1.700"/><rect x="5" y="5" width="7" height="6.600" fill="#c4dcf8" stroke="#2c58b0" stroke-width="1.300"/></g>
<rect x="391.4" y="559.6" width="1.2" height="15.4" fill="#b2b2b2"/>
<text x="399.400" y="569.400" font-size="15" font-weight="bold" font-style="italic" fill="#2c58b4">A</text><text x="405.400" y="572.400" font-size="13.300" font-weight="bold" fill="#6a2c9c">A</text><rect x="402.400" y="573" width="11.800" height="1.300" fill="#6a2c9c"/>
<rect x="423.0" y="559.6" width="1.2" height="15.4" fill="#b2b2b2"/>
<g opacity=".34" fill="#4a5a84" font-weight="bold"><text x="430" y="570.400" font-size="6.800" textLength="16" lengthAdjust="spacingAndGlyphs">6699</text><text x="453.800" y="570.600" font-size="6.400" textLength="16" lengthAdjust="spacingAndGlyphs">ABBR</text><text x="476.300" y="570.600" font-size="6.400" textLength="16" lengthAdjust="spacingAndGlyphs">A.B.C.</text></g>
<g opacity=".32"><text x="508.500" y="572.200" font-size="16.500" text-anchor="middle" fill="#445">A</text><rect x="500" y="566.400" width="17" height="1.300" fill="#e02c5c"/></g>
<g opacity=".32"><text x="531.600" y="572" font-size="16.500" text-anchor="middle" fill="#445">A</text><rect x="523.800" y="572.600" width="15.600" height="1.300" fill="#3ca05c"/></g>
<g transform="translate(546.3,559.4)" ><rect x=".6" y="5" width="12" height="8.600" fill="#dce8f8" stroke="#3c5c9c" stroke-width="1"/><rect x=".6" y="5" width="12" height="2.600" fill="#4a74c4"/><path d="M5 4.600c1-3 4-4.600 7-4.200l4 1.600-1 4.600-2.600-1.600-3 1.600-1.400 2.400z" fill="#e8c43c" stroke="#8a6c1c" stroke-width=".7"/></g>
<rect x="570.4" y="559.6" width="1.2" height="15.4" fill="#b2b2b2"/>
<text transform="translate(580.200,570.850) scale(1.23,1)" font-size="14" font-weight="bold" fill="#111" style="font-family:'DejaVu Sans',sans-serif">¶</text>
<g transform="translate(602,559.4)" ><rect x=".7" y=".7" width="12.800" height="12.600" rx="1.600" fill="#fae6e6" stroke="#c8242c" stroke-width="1.300"/><path d="M1.600 1.600l11 11" stroke="#c8242c" stroke-width="1"/><path d="M10 3v7.400H4M6.400 8l-2.600 2.400 2.600 2.400" fill="none" stroke="#111" stroke-width="1.400"/></g>
<g transform="translate(625,559.4)" ><rect x=".6" y=".6" width="13.200" height="12.800" fill="#e8f0fc" stroke="#5a84cc" stroke-width="1.100"/><rect x=".6" y=".6" width="13.200" height="2.800" fill="#8ab0ec"/><rect x="2.600" y="6" width="2.200" height="5.600" fill="#2c5cc0"/></g>
<g transform="translate(646.3,558)" ><path d="M2.400 0v5.600h13.400V0M2.400 16.400v-5.600h13.400v5.600" fill="#fff" stroke="#76848f" stroke-width="1.200"/><path d="M0 8.200h18" stroke="#8a9cac" stroke-width="1.400" stroke-dasharray="2 1.400"/></g>
<g transform="translate(672,559.6)" opacity=".38"><circle cx="7.200" cy="7.400" r="6.200" fill="#e4e8ec" stroke="#8a949c" stroke-width="1"/><path d="M3 6.600a4.600 4.600 0 0 1 7-2" fill="none" stroke="#3ca03c" stroke-width="1.500"/><path d="M1 3.600l2 4 3-2.600z" fill="#3ca03c"/><path d="M7.200 4.400v3.400l2.400 1.400" fill="none" stroke="#667" stroke-width="1"/></g>
<g transform="translate(693,557.5)" ><path d="M.6 .600h8.400l3.200 3.200v11H.6z" fill="#f8fafc" stroke="#8a9ab4" stroke-width=".9"/><path d="M3 4h1.600M6 4h1.600M3 6.600h1.600M3 9h1.600" stroke="#9ab" stroke-width="1"/><circle cx="10.400" cy="10.400" r="3.400" fill="#eef4fc" fill-opacity=".9" stroke="#8a94a8" stroke-width="1"/><path d="M13 13l3.600 3.600" stroke="#b88a3c" stroke-width="2.300" stroke-linecap="round"/></g>
</svg>
</div></body></html>
